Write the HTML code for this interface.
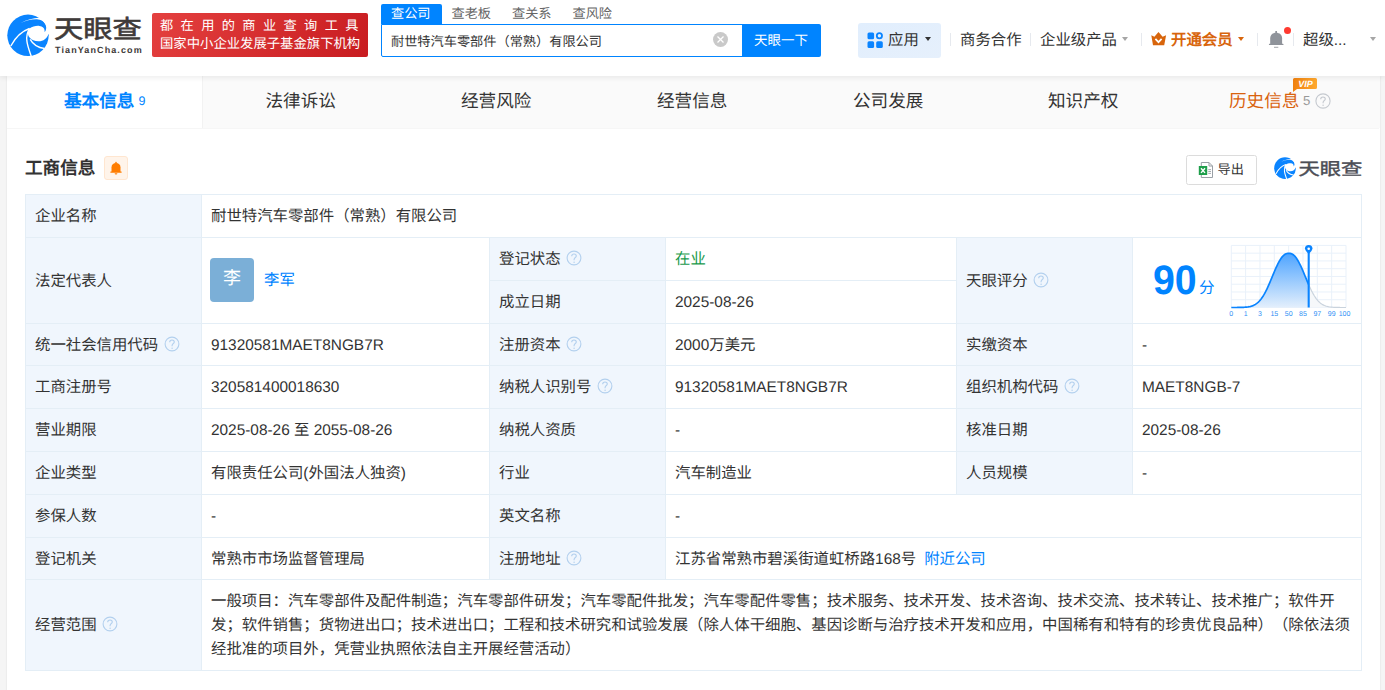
<!DOCTYPE html>
<html lang="zh-CN">
<head>
<meta charset="utf-8">
<style>
*{margin:0;padding:0;box-sizing:border-box}
html,body{width:1385px;height:690px;overflow:hidden}
body{background:#f5f5f5;font-family:"Liberation Sans",sans-serif;color:#333;text-rendering:geometricPrecision;text-spacing-trim:space-all;position:relative}
.a{position:absolute;white-space:nowrap}
#hdr{position:absolute;left:0;top:0;width:1385px;height:76px;background:#fff;box-shadow:0 2px 5px rgba(0,0,0,.07);z-index:2}
#card{position:absolute;left:7px;top:76px;width:1373px;height:640px;background:#fff;box-shadow:0 0 2px rgba(0,0,0,.1)}
.tab{position:absolute;top:0;height:52px;background:#fafafa}
.tt{position:absolute;top:88.8px;font-size:17.6px;line-height:24px;color:#333;white-space:nowrap}
.c{position:absolute;border-left:1px solid #e4eef6;border-top:1px solid #e4eef6;font-size:15.4px;line-height:20px;color:#333;display:flex;align-items:center;padding-left:9px;padding-top:2px;white-space:nowrap}
.l{background:#f0f6fd}
.q{display:inline-block;width:16px;height:16px;margin-left:5.5px;position:relative;top:-2px}
.av{display:inline-block;width:44px;height:44px;border-radius:4px;background:#7bafd7;color:#fff;font-size:18px;line-height:41px;text-align:center;margin-right:9px;position:relative;left:-1px;top:-2px}
.lk{color:#0084ff}
.sc{position:absolute;left:9px;font-size:15.4px;line-height:20px}
.sep{position:absolute;top:33px;width:1px;height:13px;background:#e6e9ee}
.nav{position:absolute;top:30px;font-size:15.4px;line-height:22px;color:#333;white-space:nowrap}
.car{position:absolute;width:0;height:0;border-left:3.5px solid transparent;border-right:3.5px solid transparent;border-top:4px solid #333;margin-top:-0.5px}
</style>
</head>
<body>
<div id="hdr">
  <svg class="a" style="left:5px;top:12px" width="46" height="46" viewBox="0 0 46 46">
<circle cx="23" cy="23.3" r="20.7" fill="#0a84ff"/>
<path fill="#fff" d="M15.5,11 C22,7.6 28.5,6 34,5.8 L46,0 L46,21.2 L39.3,21.2 L39.3,20.4 C40.7,19.4 41.2,17.5 41.2,15.5 C41,10.5 37.5,7.8 33,7.4 C27,7 21,8.8 15.5,11 Z"/>
<path fill="#fff" d="M24.5,16.5 C27.5,14.3 31,13.6 34.5,13.9 C37.5,14.2 39.5,16 39.6,18.5 C39.6,19.4 39.5,19.9 39.3,20.4 L39.3,19.8 L46,19.8 L46,22.3 L43.6,22 C42,26.5 38.5,29.3 33.5,29.3 C29.5,29.3 26.5,27.8 24.8,25.8 C22.4,23.5 22.4,19 24.5,16.5 Z"/>
<path fill="none" stroke="#fff" stroke-width="1.4" d="M5.8,34 C10,26 16,19.5 24.5,16.5"/>
<path fill="none" stroke="#fff" stroke-width="1.4" d="M24.5,16.5 C22.3,20 21.4,25 21.9,29 C22.4,34 24.5,39 26.5,45"/>
<path fill="none" stroke="#fff" stroke-width="1.4" d="M25.2,27.3 C27.8,32 32,35.5 39.5,36.5"/>
</svg>
  <div class="a" style="left:54px;top:12.5px;font-size:29.3px;line-height:32px;font-weight:500;color:#3e3a39;-webkit-text-stroke:0.7px #3e3a39;transform:scaleY(.865);transform-origin:0 28px">天眼查</div>
  <div class="a" style="left:55px;top:43.5px;font-size:9px;line-height:12px;font-weight:bold;color:#3e3a39;letter-spacing:1.1px">TianYanCha.com</div>
  <div class="a" style="left:152px;top:13px;width:216px;height:44px;border-radius:2px;background:linear-gradient(120deg,#e4403f,#c81c20)"></div>
  <div class="a" style="left:160px;top:15.5px;font-size:13.2px;line-height:20px;color:#fff;letter-spacing:7.4px;font-weight:500">都在用的商业查询工具</div>
  <div class="a" style="left:160px;top:33.7px;font-size:13.35px;line-height:20px;color:#fff">国家中小企业发展子基金旗下机构</div>
  <div class="a" style="left:381px;top:4px;width:61px;height:20px;background:#0084ff;border-radius:2px 2px 0 0"></div>
  <div class="a" style="left:391px;top:3px;font-size:13.2px;line-height:22px;color:#fff">查公司</div>
  <div class="a" style="left:451.5px;top:3px;font-size:13.2px;line-height:22px;color:#666">查老板</div>
  <div class="a" style="left:512px;top:3px;font-size:13.2px;line-height:22px;color:#666">查关系</div>
  <div class="a" style="left:572.5px;top:3px;font-size:13.2px;line-height:22px;color:#666">查风险</div>
  <div class="a" style="left:381px;top:24px;width:362px;height:33px;border:1px solid #0084ff;border-radius:0 0 0 2px"></div>
  <div class="a" style="left:391px;top:31px;font-size:13.2px;line-height:22px;color:#333">耐世特汽车零部件（常熟）有限公司</div>
  <svg class="a" style="left:713px;top:32px" width="15" height="15" viewBox="0 0 15 15"><circle cx="7.5" cy="7.5" r="7.5" fill="#c9c9c9"/><path d="M4.5,4.5L10.5,10.5M10.5,4.5L4.5,10.5" stroke="#fff" stroke-width="1.3"/></svg>
  <div class="a" style="left:742px;top:24px;width:79px;height:33px;background:#0084ff;border-radius:0 2px 2px 0"></div>
  <div class="a" style="left:754px;top:29.7px;font-size:13.5px;line-height:22px;color:#fff">天眼一下</div>

  <div class="a" style="left:858px;top:23px;width:83px;height:35px;border-radius:3px;background:linear-gradient(160deg,#e1eefd,#e6f0fc)"></div>
  <svg class="a" style="left:867px;top:32px" width="17" height="17" viewBox="0 0 17 17"><rect x="0.5" y="0.6" width="6.6" height="6.6" rx="1.5" fill="#0a84ff"/><rect x="0.5" y="9.3" width="6.6" height="6.6" rx="1.5" fill="#0a84ff"/><rect x="9.2" y="9.3" width="6.6" height="6.6" rx="1.5" fill="#0a84ff"/><circle cx="12.4" cy="3.8" r="2.6" fill="none" stroke="#0a84ff" stroke-width="1.8"/></svg>
  <div class="nav" style="left:888px">应用</div>
  <div class="car" style="left:924.5px;top:37.5px"></div>
  <div class="sep" style="left:950px"></div>
  <div class="nav" style="left:960px">商务合作</div>
  <div class="sep" style="left:1030px"></div>
  <div class="nav" style="left:1040px">企业级产品</div>
  <div class="car" style="left:1122px;top:37.5px;border-top-color:#a6a6a6"></div>
  <div class="sep" style="left:1141px"></div>
  <svg class="a" style="left:1151px;top:32px" width="16" height="14" viewBox="0 0 16 14"><path d="M0.3,3.2 L3.4,4.7 L7.5,0 L11.6,4.7 L15.1,3.2 L13.2,13.2 L2,13.2 Z" fill="#d8650c"/><path d="M4.4,6.9 L7.5,10.2 L10.6,6.9" fill="none" stroke="#fff" stroke-width="1.7"/></svg>
  <div class="nav" style="left:1171px;color:#d8650c;font-weight:bold">开通会员</div>
  <div class="car" style="left:1238px;top:37.5px;border-top-color:#d8650c"></div>
  <div class="sep" style="left:1257px"></div>
  <svg class="a" style="left:1268px;top:30px" width="17" height="19" viewBox="0 0 17 19"><rect x="7.3" y="1" width="1.7" height="2.5" fill="#8f939a"/><path d="M2.2,14.3 L2.2,8.2 C2.2,4.9 4.7,2.8 8.15,2.8 C11.6,2.8 14.1,4.9 14.1,8.2 L14.1,14.3 Z" fill="#8f939a"/><rect x="0.9" y="13.8" width="14.6" height="1.3" rx="0.6" fill="#8f939a"/><rect x="6" y="16.8" width="4.3" height="1" fill="#a3a6ab"/></svg>
  <div class="a" style="left:1284px;top:27px;width:7px;height:7px;border-radius:50%;background:#ff3a30"></div>
  <div class="sep" style="left:1293px"></div>
  <div class="nav" style="left:1303px">超级...</div>
  <div class="car" style="left:1369.5px;top:37.5px;border-top-color:#a6a6a6"></div>
</div>
<div id="card">
  <div class="tab" style="left:195px;width:1178px;border-left:1px solid #f2f2f2"></div>
  <div class="a" style="left:0;top:52px;width:1372px;height:1px;background:#f6f6f6"></div>
</div>
<div class="tt" style="left:64px;color:#0084ff;font-weight:bold">基本信息</div>
<div class="a" style="left:138.5px;top:94px;font-size:12.5px;line-height:14px;color:#0084ff">9</div>
<div class="tt" style="left:265.5px">法律诉讼</div>
<div class="tt" style="left:461px">经营风险</div>
<div class="tt" style="left:657px">经营信息</div>
<div class="tt" style="left:853px">公司发展</div>
<div class="tt" style="left:1048px">知识产权</div>
<div class="tt" style="left:1229px;color:#d9620d">历史信息</div>
<div class="a" style="left:1303px;top:93.5px;font-size:13.2px;line-height:14px;color:#999">5</div>
<svg class="a" style="left:1315px;top:92.5px" width="16" height="16" viewBox="0 0 16 16"><circle cx="8" cy="8" r="7.1" fill="none" stroke="#c5c9cf" stroke-width="1.1"/><path d="M5.7,6.3 C5.7,4.9 6.7,4 8,4 C9.3,4 10.3,4.9 10.3,6.1 C10.3,7.4 8.1,7.7 8.1,9.4 V10.3" fill="none" stroke="#c5c9cf" stroke-width="1.1"/><circle cx="8.1" cy="12.2" r="0.7" fill="#c5c9cf"/></svg>
<svg class="a" style="left:1292px;top:77px" width="26" height="16" viewBox="0 0 26 16"><defs><linearGradient id="vg" x1="0" y1="0" x2="1" y2="0"><stop offset="0" stop-color="#f0800f"/><stop offset="1" stop-color="#ffa92e"/></linearGradient></defs><path d="M2.5,1 H23.5 Q25,1 25,2.5 V10.5 Q25,12 23.5,12 H5 L1,15 V2.5 Q1,1 2.5,1 Z" fill="url(#vg)"/><text x="13.5" y="10" text-anchor="middle" font-size="9" font-weight="bold" font-style="italic" fill="#fff" font-family="Liberation Sans, sans-serif">VIP</text></svg>

<div class="a" style="left:25px;top:156px;font-size:17.6px;line-height:24px;font-weight:bold;color:#333">工商信息</div>
<div class="a" style="left:104px;top:156px;width:24px;height:24px;border-radius:3px;background:#fff4ea;border:1px solid #ffe6d0"></div>
<svg class="a" style="left:109px;top:161px" width="14" height="14" viewBox="0 0 14 14"><rect x="6.2" y="0.8" width="1.6" height="1.6" rx="0.8" fill="#ff7d00"/><path d="M2.5,11 L2.5,6.3 C2.5,3.7 4.4,2 7,2 C9.6,2 11.5,3.7 11.5,6.3 L11.5,11 Z" fill="#ff7d00"/><rect x="1.2" y="10.4" width="11.6" height="1.4" rx="0.7" fill="#ff7d00"/><path d="M5.6,12.2 A1.4,1.4 0 0 0 8.4,12.2 Z" fill="#ff7d00"/></svg>
<div class="a" style="left:1186px;top:155px;width:71px;height:30px;border:1px solid #dcdcdc;border-radius:2.5px;background:#fff"></div>
<svg class="a" style="left:1198px;top:161px" width="16" height="18" viewBox="0 0 16 18"><path d="M3.3,1.5 H11 L14.5,5 V16.5 H3.3 Z" fill="#fff" stroke="#9aa0a6" stroke-width="1"/><path d="M11,1.5 V5 H14.5" fill="none" stroke="#9aa0a6" stroke-width="1"/><path d="M10.3,8.6H13M10.3,10.5H13M10.3,12.4H13" stroke="#9aa0a6" stroke-width="0.9"/><rect x="0.8" y="5" width="8.4" height="9" fill="#1e9e4a"/><path d="M3,7.3 L7,11.9 M7,7.3 L3,11.9" stroke="#fff" stroke-width="1.4"/></svg>
<div class="a" style="left:1217.5px;top:159px;font-size:13.2px;line-height:22px;color:#333">导出</div>
<svg class="a" style="left:1273px;top:156px" width="24" height="24" viewBox="0 0 46 46">
<circle cx="23" cy="23.3" r="20.7" fill="#0a84ff"/>
<path fill="#fff" d="M15.5,11 C22,7.6 28.5,6 34,5.8 L46,0 L46,21.2 L39.3,21.2 L39.3,20.4 C40.7,19.4 41.2,17.5 41.2,15.5 C41,10.5 37.5,7.8 33,7.4 C27,7 21,8.8 15.5,11 Z"/>
<path fill="#fff" d="M24.5,16.5 C27.5,14.3 31,13.6 34.5,13.9 C37.5,14.2 39.5,16 39.6,18.5 C39.6,19.4 39.5,19.9 39.3,20.4 L39.3,19.8 L46,19.8 L46,22.3 L43.6,22 C42,26.5 38.5,29.3 33.5,29.3 C29.5,29.3 26.5,27.8 24.8,25.8 C22.4,23.5 22.4,19 24.5,16.5 Z"/>
<path fill="none" stroke="#fff" stroke-width="2" d="M5.8,34 C10,26 16,19.5 24.5,16.5"/>
<path fill="none" stroke="#fff" stroke-width="2" d="M24.5,16.5 C22.3,20 21.4,25 21.9,29 C22.4,34 24.5,39 26.5,45"/>
<path fill="none" stroke="#fff" stroke-width="2" d="M25.2,27.3 C27.8,32 32,35.5 39.5,36.5"/>
</svg>
<div class="a" style="left:1298.5px;top:153px;font-size:21.3px;line-height:28px;font-weight:500;-webkit-text-stroke:0.5px #4b4d55;color:#4b4d55;transform:scaleY(.82);transform-origin:0 24px">天眼查</div>
<div class="c l" style="left:25px;top:194px;width:176px;height:43px">企业名称</div>
<div class="c" style="left:201px;top:194px;width:1160px;height:43px">耐世特汽车零部件（常熟）有限公司</div>
<div class="c l" style="left:25px;top:237px;width:176px;height:86px">法定代表人</div>
<div class="c" style="left:201px;top:237px;width:288px;height:86px"><span class="av">李</span><span class="lk" style="position:relative;top:-1px">李军</span></div>
<div class="c l" style="left:489px;top:237px;width:176px;height:43px">登记状态<svg class="q" width="16" height="16" viewBox="0 0 16 16"><circle cx="8" cy="8" r="6.9" fill="none" stroke="#b3d0ee" stroke-width="1.1"/><path d="M5.7,6.3 C5.7,4.9 6.7,4 8,4 C9.3,4 10.3,4.9 10.3,6.1 C10.3,7.4 8.1,7.7 8.1,9.4 V10.3" fill="none" stroke="#b3d0ee" stroke-width="1.1"/><circle cx="8.1" cy="12.2" r="0.7" fill="#b3d0ee"/></svg></div>
<div class="c" style="left:665px;top:237px;width:291px;height:43px"><span style="color:#1a9a4c">在业</span></div>
<div class="c l" style="left:489px;top:280px;width:176px;height:43px">成立日期</div>
<div class="c" style="left:665px;top:280px;width:291px;height:43px">2025-08-26</div>
<div class="c l" style="left:956px;top:237px;width:176px;height:86px">天眼评分<svg class="q" width="16" height="16" viewBox="0 0 16 16"><circle cx="8" cy="8" r="6.9" fill="none" stroke="#b3d0ee" stroke-width="1.1"/><path d="M5.7,6.3 C5.7,4.9 6.7,4 8,4 C9.3,4 10.3,4.9 10.3,6.1 C10.3,7.4 8.1,7.7 8.1,9.4 V10.3" fill="none" stroke="#b3d0ee" stroke-width="1.1"/><circle cx="8.1" cy="12.2" r="0.7" fill="#b3d0ee"/></svg></div>
<div class="c" style="left:1132px;top:237px;width:229px;height:86px"><span class="a" style="left:20px;top:21px;font-size:39.3px;line-height:44px;font-weight:bold;color:#0084ff;transform:scaleY(1.05);transform-origin:0 36px">90</span>
<span class="a" style="left:66px;top:41px;font-size:15.6px;line-height:20px;color:#0084ff">分</span></div>
<div class="c l" style="left:25px;top:323px;width:176px;height:42px">统一社会信用代码<svg class="q" width="16" height="16" viewBox="0 0 16 16"><circle cx="8" cy="8" r="6.9" fill="none" stroke="#b3d0ee" stroke-width="1.1"/><path d="M5.7,6.3 C5.7,4.9 6.7,4 8,4 C9.3,4 10.3,4.9 10.3,6.1 C10.3,7.4 8.1,7.7 8.1,9.4 V10.3" fill="none" stroke="#b3d0ee" stroke-width="1.1"/><circle cx="8.1" cy="12.2" r="0.7" fill="#b3d0ee"/></svg></div>
<div class="c" style="left:201px;top:323px;width:288px;height:42px">91320581MAET8NGB7R</div>
<div class="c l" style="left:489px;top:323px;width:176px;height:42px">注册资本<svg class="q" width="16" height="16" viewBox="0 0 16 16"><circle cx="8" cy="8" r="6.9" fill="none" stroke="#b3d0ee" stroke-width="1.1"/><path d="M5.7,6.3 C5.7,4.9 6.7,4 8,4 C9.3,4 10.3,4.9 10.3,6.1 C10.3,7.4 8.1,7.7 8.1,9.4 V10.3" fill="none" stroke="#b3d0ee" stroke-width="1.1"/><circle cx="8.1" cy="12.2" r="0.7" fill="#b3d0ee"/></svg></div>
<div class="c" style="left:665px;top:323px;width:291px;height:42px">2000万美元</div>
<div class="c l" style="left:956px;top:323px;width:176px;height:42px">实缴资本</div>
<div class="c" style="left:1132px;top:323px;width:229px;height:42px">-</div>
<div class="c l" style="left:25px;top:365px;width:176px;height:43px">工商注册号</div>
<div class="c" style="left:201px;top:365px;width:288px;height:43px">320581400018630</div>
<div class="c l" style="left:489px;top:365px;width:176px;height:43px">纳税人识别号<svg class="q" width="16" height="16" viewBox="0 0 16 16"><circle cx="8" cy="8" r="6.9" fill="none" stroke="#b3d0ee" stroke-width="1.1"/><path d="M5.7,6.3 C5.7,4.9 6.7,4 8,4 C9.3,4 10.3,4.9 10.3,6.1 C10.3,7.4 8.1,7.7 8.1,9.4 V10.3" fill="none" stroke="#b3d0ee" stroke-width="1.1"/><circle cx="8.1" cy="12.2" r="0.7" fill="#b3d0ee"/></svg></div>
<div class="c" style="left:665px;top:365px;width:291px;height:43px">91320581MAET8NGB7R</div>
<div class="c l" style="left:956px;top:365px;width:176px;height:43px">组织机构代码<svg class="q" width="16" height="16" viewBox="0 0 16 16"><circle cx="8" cy="8" r="6.9" fill="none" stroke="#b3d0ee" stroke-width="1.1"/><path d="M5.7,6.3 C5.7,4.9 6.7,4 8,4 C9.3,4 10.3,4.9 10.3,6.1 C10.3,7.4 8.1,7.7 8.1,9.4 V10.3" fill="none" stroke="#b3d0ee" stroke-width="1.1"/><circle cx="8.1" cy="12.2" r="0.7" fill="#b3d0ee"/></svg></div>
<div class="c" style="left:1132px;top:365px;width:229px;height:43px">MAET8NGB-7</div>
<div class="c l" style="left:25px;top:408px;width:176px;height:43px">营业期限</div>
<div class="c" style="left:201px;top:408px;width:288px;height:43px">2025-08-26 至 2055-08-26</div>
<div class="c l" style="left:489px;top:408px;width:176px;height:43px">纳税人资质</div>
<div class="c" style="left:665px;top:408px;width:291px;height:43px">-</div>
<div class="c l" style="left:956px;top:408px;width:176px;height:43px">核准日期</div>
<div class="c" style="left:1132px;top:408px;width:229px;height:43px">2025-08-26</div>
<div class="c l" style="left:25px;top:451px;width:176px;height:43px">企业类型</div>
<div class="c" style="left:201px;top:451px;width:288px;height:43px">有限责任公司(外国法人独资)</div>
<div class="c l" style="left:489px;top:451px;width:176px;height:43px">行业</div>
<div class="c" style="left:665px;top:451px;width:291px;height:43px">汽车制造业</div>
<div class="c l" style="left:956px;top:451px;width:176px;height:43px">人员规模</div>
<div class="c" style="left:1132px;top:451px;width:229px;height:43px">-</div>
<div class="c l" style="left:25px;top:494px;width:176px;height:43px">参保人数</div>
<div class="c" style="left:201px;top:494px;width:288px;height:43px">-</div>
<div class="c l" style="left:489px;top:494px;width:176px;height:43px">英文名称</div>
<div class="c" style="left:665px;top:494px;width:696px;height:43px">-</div>
<div class="c l" style="left:25px;top:537px;width:176px;height:42px">登记机关</div>
<div class="c" style="left:201px;top:537px;width:288px;height:42px">常熟市市场监督管理局</div>
<div class="c l" style="left:489px;top:537px;width:176px;height:42px">注册地址<svg class="q" width="16" height="16" viewBox="0 0 16 16"><circle cx="8" cy="8" r="6.9" fill="none" stroke="#b3d0ee" stroke-width="1.1"/><path d="M5.7,6.3 C5.7,4.9 6.7,4 8,4 C9.3,4 10.3,4.9 10.3,6.1 C10.3,7.4 8.1,7.7 8.1,9.4 V10.3" fill="none" stroke="#b3d0ee" stroke-width="1.1"/><circle cx="8.1" cy="12.2" r="0.7" fill="#b3d0ee"/></svg></div>
<div class="c" style="left:665px;top:537px;width:696px;height:42px">江苏省常熟市碧溪街道虹桥路168号<span class="lk" style="margin-left:8px">附近公司</span></div>
<div class="c l" style="left:25px;top:579px;width:176px;height:91px">经营范围<svg class="q" width="16" height="16" viewBox="0 0 16 16"><circle cx="8" cy="8" r="6.9" fill="none" stroke="#b3d0ee" stroke-width="1.1"/><path d="M5.7,6.3 C5.7,4.9 6.7,4 8,4 C9.3,4 10.3,4.9 10.3,6.1 C10.3,7.4 8.1,7.7 8.1,9.4 V10.3" fill="none" stroke="#b3d0ee" stroke-width="1.1"/><circle cx="8.1" cy="12.2" r="0.7" fill="#b3d0ee"/></svg></div>
<div class="c" style="left:201px;top:579px;width:1160px;height:91px"><div class="sc" style="top:11.5px">一般项目：汽车零部件及配件制造；汽车零部件研发；汽车零配件批发；汽车零配件零售；技术服务、技术开发、技术咨询、技术交流、技术转让、技术推广；软件开</div><div class="sc" style="top:36.1px">发；软件销售；货物进出口；技术进出口；工程和技术研究和试验发展（除人体干细胞、基因诊断与治疗技术开发和应用，中国稀有和特有的珍贵优良品种）（除依法须</div><div class="sc" style="top:60.1px">经批准的项目外，凭营业执照依法自主开展经营活动）</div></div>
<div style="position:absolute;left:25px;top:194px;width:1337px;height:477px;border-right:1px solid #e4eef6;border-bottom:1px solid #e4eef6;pointer-events:none"></div>
<svg class="a" style="left:1225px;top:240px" width="130" height="82" viewBox="0 0 130 82">
<defs><linearGradient id="gf" x1="0" y1="0" x2="0" y2="1"><stop offset="0" stop-color="#4ea4ff"/><stop offset="1" stop-color="#e3effc"/></linearGradient></defs>
<path d="M6.30,5.40V67.50M6.30,5.40H121.00M20.64,5.40V67.50M6.30,13.16H121.00M34.97,5.40V67.50M6.30,20.93H121.00M49.31,5.40V67.50M6.30,28.69H121.00M63.65,5.40V67.50M6.30,36.45H121.00M77.99,5.40V67.50M6.30,44.21H121.00M92.32,5.40V67.50M6.30,51.98H121.00M106.66,5.40V67.50M6.30,59.74H121.00M121.00,5.40V67.50M6.30,67.50H121.00" stroke="#e9f1fa" stroke-width="1" fill="none"/>
<polygon points="6.30,67.50 6.30,67.50 7.07,67.50 7.85,67.50 8.62,67.49 9.40,67.49 10.17,67.49 10.94,67.48 11.72,67.48 12.49,67.47 13.27,67.47 14.04,67.46 14.81,67.44 15.59,67.43 16.36,67.41 17.14,67.38 17.91,67.35 18.68,67.32 19.46,67.27 20.23,67.21 21.01,67.15 21.78,67.06 22.55,66.97 23.33,66.85 24.10,66.71 24.88,66.55 25.65,66.36 26.42,66.14 27.20,65.88 27.97,65.59 28.75,65.24 29.52,64.86 30.29,64.41 31.07,63.91 31.84,63.35 32.62,62.72 33.39,62.03 34.16,61.25 34.94,60.40 35.71,59.47 36.49,58.46 37.26,57.36 38.03,56.18 38.81,54.91 39.58,53.56 40.36,52.13 41.13,50.62 41.90,49.04 42.68,47.39 43.45,45.68 44.23,43.92 45.00,42.12 45.77,40.28 46.55,38.42 47.32,36.55 48.10,34.67 48.87,32.82 49.64,30.99 50.42,29.19 51.19,27.45 51.97,25.78 52.74,24.17 53.51,22.66 54.29,21.23 55.06,19.92 55.84,18.71 56.61,17.62 57.38,16.66 58.16,15.82 58.93,15.11 59.71,14.52 60.48,14.06 61.25,13.71 62.03,13.48 62.80,13.35 63.58,13.30 64.35,13.31 65.12,13.39 65.90,13.56 66.67,13.84 67.45,14.24 68.22,14.75 68.99,15.39 69.77,16.16 70.54,17.05 71.32,18.07 72.09,19.21 72.86,20.46 73.64,21.82 74.41,23.28 75.19,24.84 75.96,26.47 76.73,28.18 77.51,29.94 78.28,31.75 79.06,33.60 79.83,35.46 80.60,37.33 81.38,39.20 82.15,41.06 82.93,42.88 83.70,44.67 83.70,67.50" fill="url(#gf)"/>
<polygon points="83.70,67.50 83.70,44.67 84.63,46.76 85.57,48.77 86.50,50.68 87.43,52.48 88.36,54.17 89.30,55.75 90.23,57.20 91.16,58.52 92.09,59.73 93.03,60.81 93.96,61.78 94.89,62.64 95.82,63.40 96.76,64.06 97.69,64.64 98.62,65.13 99.55,65.55 100.49,65.91 101.42,66.21 102.35,66.46 103.28,66.67 104.22,66.84 105.15,66.98 106.08,67.09 107.01,67.18 107.95,67.26 108.88,67.31 109.81,67.36 110.74,67.39 111.68,67.42 112.61,67.44 113.54,67.46 114.47,67.47 115.41,67.48 116.34,67.48 117.27,67.49 118.20,67.49 119.14,67.49 120.07,67.50 121.00,67.50 121.00,67.50" fill="#f6f8fa"/>
<polyline points="6.30,67.50 7.07,67.50 7.85,67.50 8.62,67.49 9.40,67.49 10.17,67.49 10.94,67.48 11.72,67.48 12.49,67.47 13.27,67.47 14.04,67.46 14.81,67.44 15.59,67.43 16.36,67.41 17.14,67.38 17.91,67.35 18.68,67.32 19.46,67.27 20.23,67.21 21.01,67.15 21.78,67.06 22.55,66.97 23.33,66.85 24.10,66.71 24.88,66.55 25.65,66.36 26.42,66.14 27.20,65.88 27.97,65.59 28.75,65.24 29.52,64.86 30.29,64.41 31.07,63.91 31.84,63.35 32.62,62.72 33.39,62.03 34.16,61.25 34.94,60.40 35.71,59.47 36.49,58.46 37.26,57.36 38.03,56.18 38.81,54.91 39.58,53.56 40.36,52.13 41.13,50.62 41.90,49.04 42.68,47.39 43.45,45.68 44.23,43.92 45.00,42.12 45.77,40.28 46.55,38.42 47.32,36.55 48.10,34.67 48.87,32.82 49.64,30.99 50.42,29.19 51.19,27.45 51.97,25.78 52.74,24.17 53.51,22.66 54.29,21.23 55.06,19.92 55.84,18.71 56.61,17.62 57.38,16.66 58.16,15.82 58.93,15.11 59.71,14.52 60.48,14.06 61.25,13.71 62.03,13.48 62.80,13.35 63.58,13.30 64.35,13.31 65.12,13.39 65.90,13.56 66.67,13.84 67.45,14.24 68.22,14.75 68.99,15.39 69.77,16.16 70.54,17.05 71.32,18.07 72.09,19.21 72.86,20.46 73.64,21.82 74.41,23.28 75.19,24.84 75.96,26.47 76.73,28.18 77.51,29.94 78.28,31.75 79.06,33.60 79.83,35.46 80.60,37.33 81.38,39.20 82.15,41.06 82.93,42.88 83.70,44.67" fill="none" stroke="#0a84ff" stroke-width="1.7"/>
<polyline points="83.70,44.67 84.63,46.76 85.57,48.77 86.50,50.68 87.43,52.48 88.36,54.17 89.30,55.75 90.23,57.20 91.16,58.52 92.09,59.73 93.03,60.81 93.96,61.78 94.89,62.64 95.82,63.40 96.76,64.06 97.69,64.64 98.62,65.13 99.55,65.55 100.49,65.91 101.42,66.21 102.35,66.46 103.28,66.67 104.22,66.84 105.15,66.98 106.08,67.09 107.01,67.18 107.95,67.26 108.88,67.31 109.81,67.36 110.74,67.39 111.68,67.42 112.61,67.44 113.54,67.46 114.47,67.47 115.41,67.48 116.34,67.48 117.27,67.49 118.20,67.49 119.14,67.49 120.07,67.50 121.00,67.50" fill="none" stroke="#c9d3dd" stroke-width="1.2"/>
<path d="M83.70,12 V67.50" stroke="#0a84ff" stroke-width="2.1"/>
<path d="M79.90,8.8 A3.8,3.8 0 1 1 87.50,8.8 Q87.20,11 83.70,14 Q80.20,11 79.90,8.8Z" fill="#0a84ff"/>
<circle cx="83.70" cy="8.8" r="1.3" fill="#fff"/>
<text x="6.30" y="76.3" text-anchor="middle" font-size="7" fill="#2f8ff5" font-family="Liberation Sans, sans-serif">0</text>
<text x="20.64" y="76.3" text-anchor="middle" font-size="7" fill="#2f8ff5" font-family="Liberation Sans, sans-serif">1</text>
<text x="34.97" y="76.3" text-anchor="middle" font-size="7" fill="#2f8ff5" font-family="Liberation Sans, sans-serif">3</text>
<text x="49.31" y="76.3" text-anchor="middle" font-size="7" fill="#2f8ff5" font-family="Liberation Sans, sans-serif">15</text>
<text x="63.65" y="76.3" text-anchor="middle" font-size="7" fill="#2f8ff5" font-family="Liberation Sans, sans-serif">50</text>
<text x="77.99" y="76.3" text-anchor="middle" font-size="7" fill="#2f8ff5" font-family="Liberation Sans, sans-serif">85</text>
<text x="92.32" y="76.3" text-anchor="middle" font-size="7" fill="#2f8ff5" font-family="Liberation Sans, sans-serif">97</text>
<text x="106.66" y="76.3" text-anchor="middle" font-size="7" fill="#2f8ff5" font-family="Liberation Sans, sans-serif">99</text>
<text x="119.50" y="76.3" text-anchor="middle" font-size="7" fill="#2f8ff5" font-family="Liberation Sans, sans-serif">100</text>
</svg>
</body>
</html>
